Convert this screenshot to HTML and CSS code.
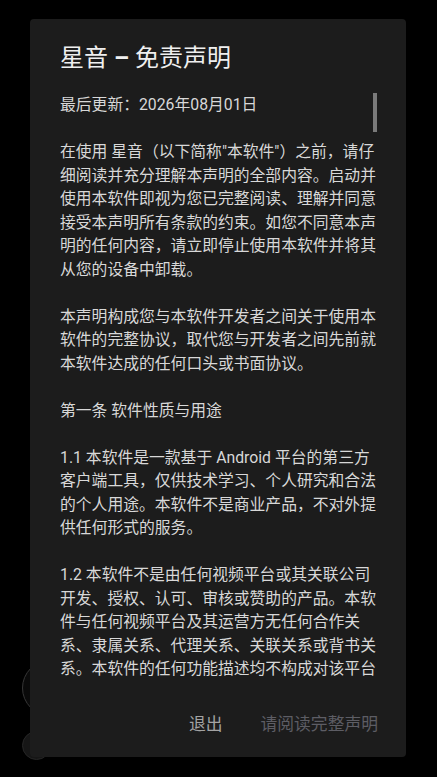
FILE: index.html
```html
<!DOCTYPE html>
<html lang="zh-CN">
<head>
<meta charset="utf-8">
<title>星音 – 免责声明</title>
<link rel="stylesheet" href="styles.css">
</head>
<body>
<div class="backdrop">
  <div class="bg-ring"></div>
  <div class="bg-dot"></div>
</div>
<div class="dialog">
  <h1 class="title">星音 <span class="dash">–</span> 免责声明</h1>
  <div class="content">
    <div class="thumb"></div>
    <p>最后更新：2026年08月01日</p>
    <p>在使用 星音（以下简称"本软件"）之前，请仔细阅读并充分理解本声明的全部内容。启动并使用本软件即视为您已完整阅读、理解并同意接受本声明所有条款的约束。如您不同意本声明的任何内容，请立即停止使用本软件并将其从您的设备中卸载。</p>
    <p>本声明构成您与本软件开发者之间关于使用本软件的完整协议，取代您与开发者之间先前就本软件达成的任何口头或书面协议。</p>
    <p>第一条 软件性质与用途</p>
    <p>1.1 本软件是一款基于 Android 平台的第三方客户端工具，仅供技术学习、个人研究和合法的个人用途。本软件不是商业产品，不对外提供任何形式的服务。</p>
    <p>1.2 本软件不是由任何视频平台或其关联公司开发、授权、认可、审核或赞助的产品。本软件与任何视频平台及其运营方无任何合作关系、隶属关系、代理关系、关联关系或背书关系。本软件的任何功能描述均不构成对该平台的认可。</p>
  </div>
  <div class="actions">
    <button class="btn btn-exit" type="button">退出</button>
    <button class="btn btn-confirm" type="button" disabled>请阅读完整声明</button>
  </div>
</div>
</body>
</html>
```
FILE: styles.css
```css
html, body {
  margin: 0;
  padding: 0;
}
body {
  width: 437px;
  height: 777px;
  overflow: hidden;
  background: #000;
  position: relative;
  font-family: Roboto, "Noto Sans CJK SC", sans-serif;
}
.backdrop {
  position: absolute;
  inset: 0;
  z-index: 0;
}
.bg-ring {
  position: absolute;
  left: 22px;
  top: 660px;
  width: 54px;
  height: 54px;
  border-radius: 50%;
  border: 1px solid #363636;
  background: #0a0a0a;
}
.bg-dot {
  position: absolute;
  left: 22px;
  top: 731px;
  width: 27px;
  height: 27px;
  border-radius: 50%;
  border: 1px solid #262626;
  background: #161616;
}
.dialog {
  position: relative;
  z-index: 1;
  margin: 19px 0 0 30px;
  width: 376px;
  height: 738px;
  box-sizing: border-box;
  background: #1c1c1c;
  border-radius: 4px;
  display: flex;
  flex-direction: column;
}
.title {
  margin: 0;
  padding: 23px 30px 0 30px;
  font-size: 24px;
  line-height: 32px;
  font-weight: 400;
  color: #efefef;
}
.dash {
  font-weight: 700;
}
.content {
  position: relative;
  margin: 19px 0 0 30px;
  width: 317px;
  height: 589px;
  overflow: hidden;
  font-size: 15.8px;
  line-height: 23.5px;
  color: #d8d8d8;
}
.content p {
  margin: 0 0 23.5px 0;
}
.thumb {
  position: absolute;
  right: 0;
  top: 0;
  width: 4px;
  height: 39px;
  background: #7a7a7a;
}
.actions {
  margin-top: 18px;
  height: 48px;
  display: flex;
  align-items: center;
  justify-content: flex-end;
  gap: 38px;
  padding-right: 28px;
}
.btn {
  border: 0;
  background: none;
  padding: 0;
  font-family: Roboto, "Noto Sans CJK SC", sans-serif;
  font-size: 16.8px;
  line-height: 24px;
}
.btn-exit {
  color: #a3a3a3;
}
.btn-confirm {
  color: #5d5d64;
}
```
